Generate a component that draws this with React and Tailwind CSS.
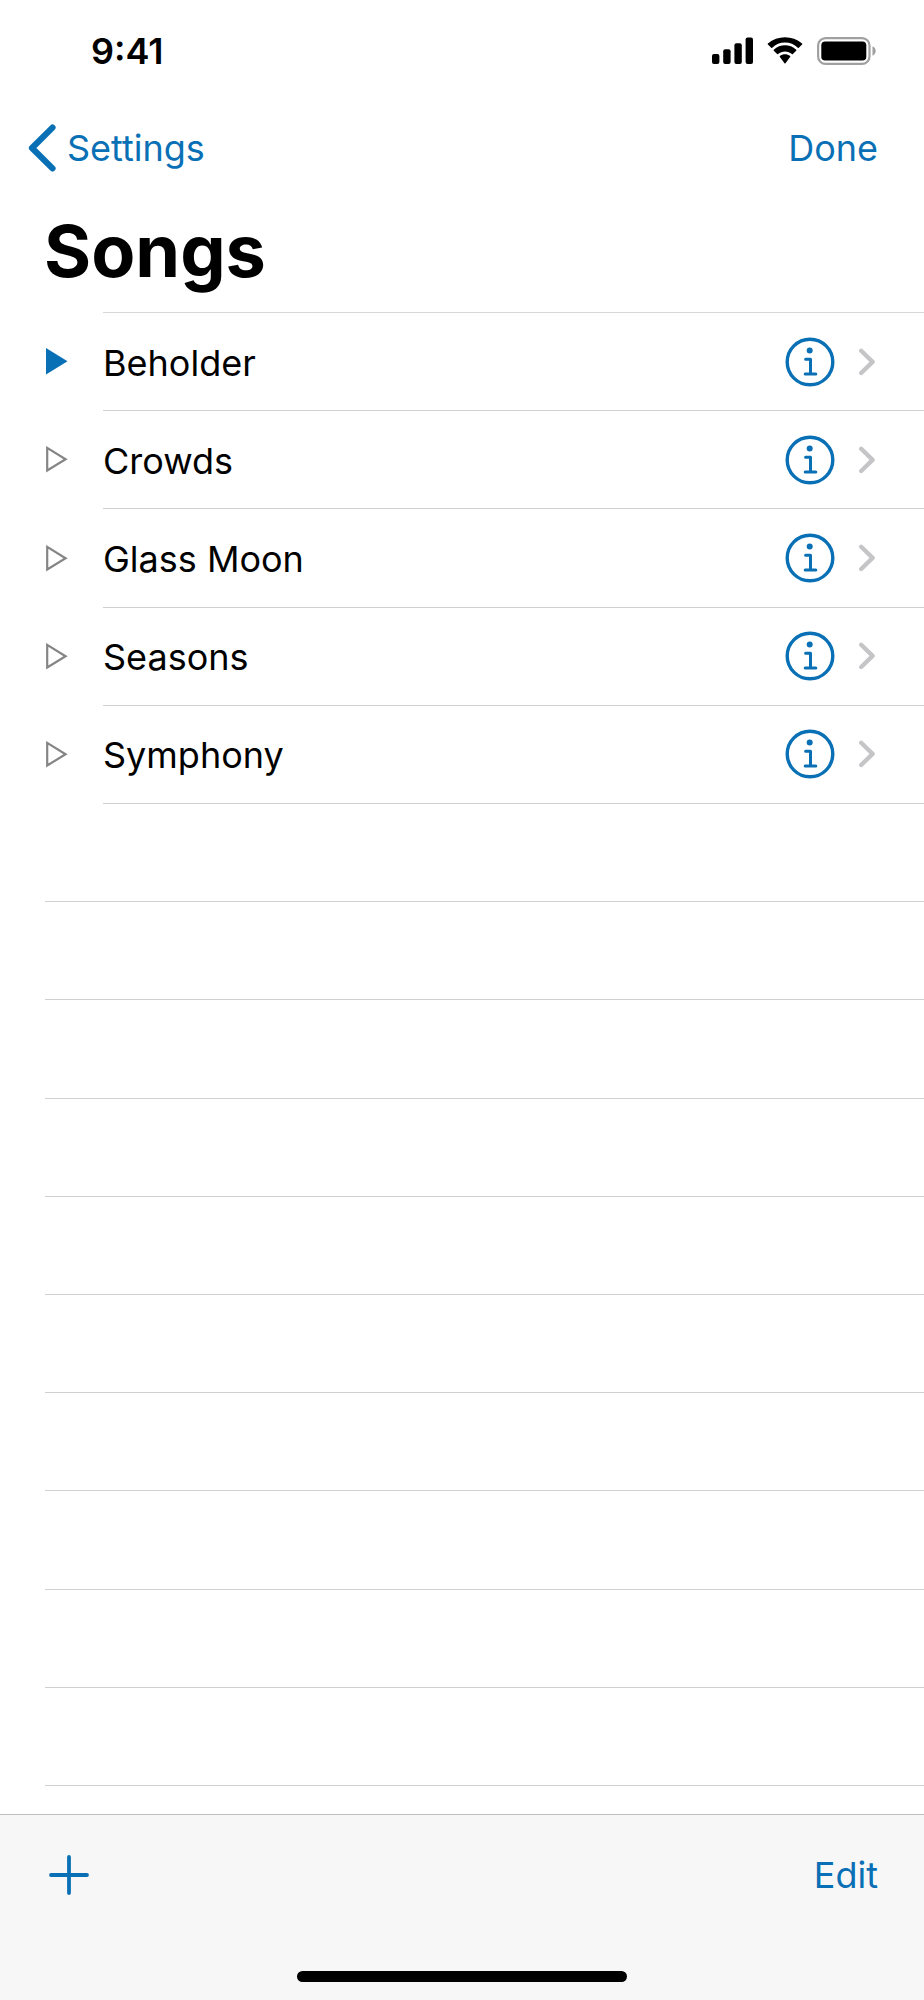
import { useState } from 'react';

const SONGS = ['Beholder', 'Crowds', 'Glass Moon', 'Seasons', 'Symphony'];
const EMPTY_ROWS = 10;

function StatusBar() {
  return (
    <div className="flex h-[101px] items-center justify-between pl-[91px] pr-12">
      <time className="text-4xl leading-10 font-semibold">9:41</time>
      <div className="flex items-center gap-3.5">
        <svg width="41" height="27" viewBox="0 0 41 27" aria-hidden="true">
          <rect x="0" y="17" width="7.4" height="10" rx="2" />
          <rect x="11.2" y="12.3" width="7.4" height="14.7" rx="2" />
          <rect x="22.4" y="6.2" width="7.4" height="20.8" rx="2" />
          <rect x="33.6" y="0.4" width="7.4" height="26.6" rx="2" />
        </svg>
        <svg width="36" height="27" viewBox="0 0 36 27" aria-hidden="true">
          <path d="M18 5.6c4.9 0 9.4 1.9 12.8 5.2.3.3.7.3 1 0l3.3-3.3c.3-.3.3-.7 0-1C25.5-2 10.5-2 .9 6.5c-.3.3-.3.7 0 1l3.3 3.3c.3.3.7.3 1 0C8.6 7.5 13.1 5.6 18 5.6z" />
          <path d="M18 14.4c2.6 0 5 1 6.9 2.7.3.3.7.3 1 0l3.3-3.4c.3-.3.3-.7 0-1-6.3-5.9-16.1-5.9-22.4 0-.3.3-.3.7 0 1l3.3 3.4c.3.3.7.3 1 0 1.9-1.7 4.3-2.7 6.9-2.7z" />
          <path d="M23.1 20.1c.3-.3.3-.7 0-1-2.9-2.5-7.3-2.5-10.2 0-.3.3-.3.7 0 1l4.600 6.200c.3.3.7.3 1 0z" />
        </svg>
        <svg width="59" height="28" viewBox="0 0 59 28" aria-hidden="true">
          <rect x="1.1" y="1.1" width="51.4" height="25.8" rx="7.5" fill="none" stroke="#a0a0a0" strokeWidth="2.2" />
          <rect x="4.3" y="4.6" width="45" height="19" rx="3.8" />
          <path d="M55.5 9.3c1.9.8 3.2 2.6 3.2 4.7s-1.3 3.9-3.2 4.7z" fill="#a0a0a0" />
        </svg>
      </div>
    </div>
  );
}

function PlayIcon({ active }) {
  return (
    <svg width="22" height="28" viewBox="0 0 22 28" aria-hidden="true">
      {active ? (
        <path d="M0 0v26.4L21.5 13.2z" fill="#0a70b5" />
      ) : (
        <path d="M1.2 1.9v22.6L19.6 13.2z" fill="none" stroke="#858585" strokeWidth="2.2" />
      )}
    </svg>
  );
}

function InfoIcon() {
  return (
    <svg width="50" height="50" viewBox="0 0 50 50" fill="none" stroke="#0a70b5" aria-hidden="true">
      <circle cx="25" cy="25" r="22.8" strokeWidth="3.4" />
      <circle cx="24.7" cy="13.4" r="3" fill="#0a70b5" stroke="none" />
      <path d="M20.6 22.2h4.9v14M20.2 37h10.6" strokeWidth="3" strokeLinecap="round" strokeLinejoin="round" />
    </svg>
  );
}

function SongRow({ name, active, onPlay }) {
  return (
    <li className="flex grow basis-[98px] pl-[46px]">
      <button type="button" onClick={onPlay} className="w-[57px] flex-none" aria-label={`Play ${name}`}>
        <PlayIcon active={active} />
      </button>
      <div className="flex flex-1 items-center border-b border-[#d1d1d3] pr-12">
        <span className="flex-1 pt-0.5 text-4xl leading-11">{name}</span>
        <button type="button" aria-label={`${name} info`}>
          <InfoIcon />
        </button>
        <svg className="ml-[23px]" width="18" height="28" viewBox="0 0 18 28" fill="none" aria-hidden="true">
          <path d="M3.2 2.8 14.6 13.9 3.2 25" stroke="#c5c5c7" strokeWidth="4.3" strokeLinecap="round" strokeLinejoin="round" />
        </svg>
      </div>
    </li>
  );
}

export default function App() {
  const [current, setCurrent] = useState('Beholder');

  return (
    <div className="flex min-h-screen flex-col bg-white font-['Inter',sans-serif] text-black">
      <StatusBar />

      <header>
        <nav className="flex h-[94px] items-center justify-between pl-7 pr-[46px] text-4xl leading-11 text-[#0a70b5]">
          <a href="#settings" className="flex items-center gap-2.5">
            <svg width="29" height="48" viewBox="0 0 29 48" fill="none" aria-hidden="true">
              <path d="M24.5 3.6 4 24l20.5 20.4" stroke="#0a70b5" strokeWidth="6.2" strokeLinecap="round" strokeLinejoin="round" />
            </svg>
            Settings
          </a>
          <button type="button">Done</button>
        </nav>
        <h1 className="pt-1.5 pb-3 pl-11 text-7xl leading-[99px] font-bold">Songs</h1>
        <div className="ml-[103px] border-b border-[#d8d8da]" />
      </header>

      <ul className="flex flex-1 flex-col pb-7">
        {SONGS.map((name) => (
          <SongRow key={name} name={name} active={name === current} onPlay={() => setCurrent(name)} />
        ))}
        {Array.from({ length: EMPTY_ROWS }, (_, i) => (
          <li key={i} aria-hidden="true" className="ml-[45px] grow basis-[98px] border-b border-[#d1d1d3]" />
        ))}
      </ul>

      <footer className="border-t border-[#bebebe] bg-[#f7f7f7] text-[#0a70b5]">
        <div className="flex h-[120px] items-center justify-between pl-[49px] pr-[46px]">
          <button type="button" aria-label="Add song">
            <svg width="40" height="40" viewBox="0 0 40 40" fill="none" aria-hidden="true">
              <path d="M20 2v36M2 20h36" stroke="#0a70b5" strokeWidth="3.8" strokeLinecap="round" />
            </svg>
          </button>
          <button type="button" className="text-4xl leading-11">Edit</button>
        </div>
        <div className="flex h-[65px] items-center justify-center pt-[18px]">
          <div className="h-[11px] w-[330px] rounded-full bg-black" />
        </div>
      </footer>
    </div>
  );
}
